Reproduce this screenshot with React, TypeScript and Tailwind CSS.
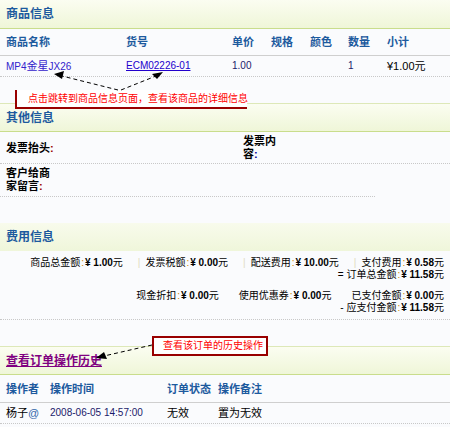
import React from 'react'

const FONT = "font-['Liberation_Sans','Noto_Sans_CJK_SC',sans-serif]"

function SectionHead({ title, top = false }: { title: React.ReactNode; top?: boolean }) {
  return (
    <div
      className={`h-[29px] flex items-center pl-[6px] bg-gradient-to-b from-[#fbfdf1] to-[#eff6d8] border-b border-[#c9dd8c] text-[12px] font-bold text-[#1d5a9e] ${
        top ? 'border-t border-t-[#dde8b8]' : ''
      }`}
    >
      {title}
    </div>
  )
}

function Money({ label, value, sep }: { label: string; value: string; sep?: string }) {
  return (
    <span className="flex items-center whitespace-nowrap">
      {sep && <span className="mr-[5px] text-[#e0dcc0]">{sep}</span>}
      <span className="text-black">{label}</span>
      <span className="text-[#cc8800] px-[1px]">:</span>
      <span className="font-bold text-black">¥ {value}</span>
      <span className="text-black">元</span>
    </span>
  )
}

export default function App() {
  return (
    <div className={`${FONT} relative w-[450px] h-[427px] overflow-hidden bg-[#fafbfd] text-[11px] leading-[12px]`}>
      {/* 商品信息 */}
      <SectionHead title="商品信息" />
      <div className="h-[27px] flex items-center pl-[6px] border-b border-[#cfcfcf] font-bold text-[#1d5a9e]">
        <span className="w-[120px]">商品名称</span>
        <span className="w-[106px]">货号</span>
        <span className="w-[39px]">单价</span>
        <span className="w-[39px]">规格</span>
        <span className="w-[38px]">颜色</span>
        <span className="w-[39px]">数量</span>
        <span>小计</span>
      </div>
      <div className="h-[21px] flex items-center pl-[6px] border-b border-dotted border-[#c8c8c8]">
        <span className="w-[120px] text-[10px] text-[#3322cc]">
          MP4<span className="text-[11px]">金星</span>JX26
        </span>
        <span className="w-[106px] text-[10px] text-[#2200cc] underline">ECM02226-01</span>
        <span className="w-[116px] text-[10px] text-[#1a1a6a]">1.00</span>
        <span className="w-[39px] text-[10px] text-[#1a1a6a]">1</span>
        <span className="text-black">¥1.00元</span>
      </div>
      <div className="h-[26px]" />

      {/* 其他信息 */}
      <SectionHead title="其他信息" top />
      <div className="h-[32px] flex items-center pl-[6px] border-b border-dotted border-[#c8c8c8] font-bold text-black">
        <span className="block w-[237px]">
          发票抬头<span className="text-[#990000]">:</span>
        </span>
        <span className="block w-[34px] leading-[13px]">
          发票内容<span className="text-[#000099]">:</span>
        </span>
      </div>
      <div className="w-[375px] h-[33px] flex items-center pl-[6px] border-b border-dotted border-[#c8c8c8] font-bold text-black">
        <span className="block w-[46px] leading-[13px]">
          客户给商家留言<span className="text-[#990000]">:</span>
        </span>
      </div>
      <div className="h-[26px]" />

      {/* 费用信息 */}
      <div className="h-[28px] flex items-center pl-[6px] bg-gradient-to-b from-[#f8fbec] to-[#eff6da] text-[12px] font-bold text-[#1d5a9e]">
        费用信息
      </div>
      <div className="pt-[6px] pb-[5px] pr-[6px] border-b border-dotted border-[#c8c8c8] flex flex-col items-end text-[10px]">
        <div className="h-[12px] flex items-center gap-[15px]">
          <Money label="商品总金额" value="1.00" />
          <Money label="发票税额" value="0.00" sep="|" />
          <Money label="配送费用" value="10.00" sep="|" />
          <Money label="支付费用" value="0.58" sep="|" />
        </div>
        <div className="h-[12px] flex items-center">
          <Money label="= 订单总金额" value="11.58" />
        </div>
        <div className="h-[9px]" />
        <div className="h-[12px] flex items-center gap-[20px]">
          <Money label="现金折扣" value="0.00" />
          <Money label="使用优惠券" value="0.00" />
          <Money label="已支付金额" value="0.00" />
        </div>
        <div className="h-[12px] flex items-center">
          <Money label="- 应支付金额" value="11.58" />
        </div>
      </div>
      <div className="h-[26px]" />

      {/* 操作历史 */}
      <SectionHead title={<span className="text-[#800080] underline">查看订单操作历史</span>} top />
      <div className="h-[28px] flex items-center pl-[6px] border-b border-[#cfcfcf] font-bold text-[#1d5a9e]">
        <span className="w-[44px]">操作者</span>
        <span className="w-[117px]">操作时间</span>
        <span className="w-[51px]">订单状态</span>
        <span>操作备注</span>
      </div>
      <div className="h-[21px] flex items-center pl-[6px] border-b border-dotted border-[#c8c8c8] text-black">
        <span className="w-[44px]">
          杨子<span className="text-[#3366aa]">@</span>
        </span>
        <span className="w-[117px] text-[#1a1a6a] text-[10px]">2008-06-05 14:57:00</span>
        <span className="w-[51px]">无效</span>
        <span>置为无效</span>
      </div>

      {/* 批注 */}
      <div className="absolute left-[15px] top-[90px] w-[232px] h-[19px] flex items-center pl-[11px] bg-white border-l-2 border-b-2 border-[#990000] text-[10px] text-[#ff0000] whitespace-nowrap">
        点击跳转到商品信息页面，查看该商品的详细信息
      </div>
      <div className="absolute left-[152px] top-[336px] w-[116px] h-[20px] flex items-center pl-[9px] bg-white border-2 border-[#990000] text-[10px] text-[#ff0000] whitespace-nowrap">
        查看该订单的历史操作
      </div>
      <svg className="absolute left-0 top-0 pointer-events-none" width="450" height="427" viewBox="0 0 450 427">
        <g stroke="#000" strokeWidth="1" strokeDasharray="4 3" fill="none">
          <line x1="118" y1="90" x2="62" y2="76" />
          <line x1="121" y1="90" x2="156" y2="76" />
          <line x1="152" y1="345" x2="104" y2="356" />
        </g>
        <g fill="#000">
          <polygon points="54,74 64,71 62,79" />
          <polygon points="163,72 152,74 157,79" />
          <polygon points="96,358 104,352 107,359" />
        </g>
      </svg>
    </div>
  )
}
